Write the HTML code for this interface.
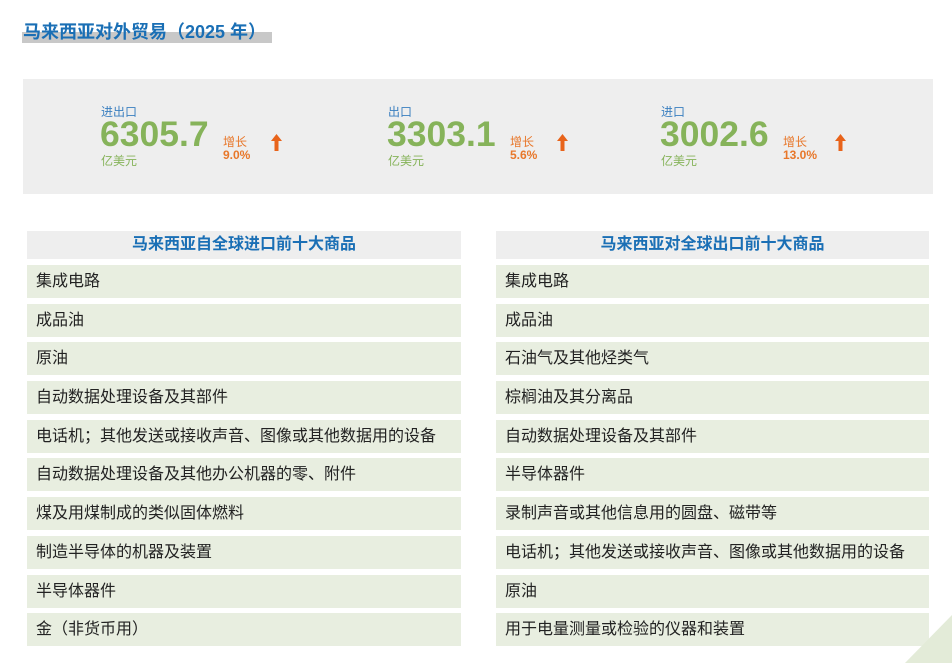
<!DOCTYPE html>
<html><head><meta charset="utf-8"><style>
*{margin:0;padding:0;box-sizing:border-box}
body{width:952px;height:663px;background:#fff;position:relative;overflow:hidden;font-family:"Liberation Sans","Noto Sans CJK SC",sans-serif}
.abs{position:absolute}
.title{left:23px;top:18px;font-size:18px;font-weight:bold;color:#1a6fb5;white-space:nowrap;z-index:2}
.tbar{left:22px;top:32px;width:250px;height:11px;background:#c8c8c8}
.box{left:23px;top:79px;width:910px;height:115px;background:#eeeeee}
.lab{font-size:12px;color:#3a7fc0}
.num{font-size:35.5px;font-weight:bold;color:#86b35a;line-height:35px}
.unit{font-size:12px;color:#86b35a}
.gr{font-size:12px;color:#e8772a}
.pc{font-size:12px;color:#e8772a;font-weight:bold}
.hd{height:28px;background:#eeeeee;color:#1a6fb5;font-weight:bold;font-size:16px;text-align:center;line-height:28px}
.row{height:33px;background:#e8eee0;font-size:16px;color:#222;line-height:33px;padding-left:9px;white-space:nowrap}
.g{height:5.7px}
</style></head><body>
<div class="abs tbar"></div>
<div class="abs title">马来西亚对外贸易（2025 年）</div>
<div class="abs box"></div>

<div class="abs lab" style="left:101px;top:103px">进出口</div>
<div class="abs num" style="left:100px;top:117px">6305.7</div>
<div class="abs unit" style="left:101px;top:152px">亿美元</div>
<div class="abs gr" style="left:223px;top:133px">增长</div>
<div class="abs pc" style="left:223px;top:148px">9.0%</div>

<div class="abs lab" style="left:388px;top:103px">出口</div>
<div class="abs num" style="left:387px;top:117px">3303.1</div>
<div class="abs unit" style="left:388px;top:152px">亿美元</div>
<div class="abs gr" style="left:510px;top:133px">增长</div>
<div class="abs pc" style="left:510px;top:148px">5.6%</div>

<div class="abs lab" style="left:661px;top:103px">进口</div>
<div class="abs num" style="left:660px;top:117px">3002.6</div>
<div class="abs unit" style="left:661px;top:152px">亿美元</div>
<div class="abs gr" style="left:783px;top:133px">增长</div>
<div class="abs pc" style="left:783px;top:148px">13.0%</div>

<svg class="abs" style="left:270px;top:134px" width="13" height="17"><path d="M6.5 0L12 7H8.5V17H4.5V7H1Z" fill="#e8631a"/></svg>
<svg class="abs" style="left:556px;top:134px" width="13" height="17"><path d="M6.5 0L12 7H8.5V17H4.5V7H1Z" fill="#e8631a"/></svg>
<svg class="abs" style="left:834px;top:134px" width="13" height="17"><path d="M6.5 0L12 7H8.5V17H4.5V7H1Z" fill="#e8631a"/></svg>

<div class="abs" style="left:27px;top:231px;width:434px">
<div class="hd">马来西亚自全球进口前十大商品</div>
<div style="height:6px"></div>
<div class="row">集成电路</div><div class="g"></div>
<div class="row">成品油</div><div class="g"></div>
<div class="row">原油</div><div class="g"></div>
<div class="row">自动数据处理设备及其部件</div><div class="g"></div>
<div class="row">电话机；其他发送或接收声音、图像或其他数据用的设备</div><div class="g"></div>
<div class="row">自动数据处理设备及其他办公机器的零、附件</div><div class="g"></div>
<div class="row">煤及用煤制成的类似固体燃料</div><div class="g"></div>
<div class="row">制造半导体的机器及装置</div><div class="g"></div>
<div class="row">半导体器件</div><div class="g"></div>
<div class="row">金（非货币用）</div>
</div>

<div class="abs" style="left:496px;top:231px;width:433px">
<div class="hd">马来西亚对全球出口前十大商品</div>
<div style="height:6px"></div>
<div class="row">集成电路</div><div class="g"></div>
<div class="row">成品油</div><div class="g"></div>
<div class="row">石油气及其他烃类气</div><div class="g"></div>
<div class="row">棕榈油及其分离品</div><div class="g"></div>
<div class="row">自动数据处理设备及其部件</div><div class="g"></div>
<div class="row">半导体器件</div><div class="g"></div>
<div class="row">录制声音或其他信息用的圆盘、磁带等</div><div class="g"></div>
<div class="row">电话机；其他发送或接收声音、图像或其他数据用的设备</div><div class="g"></div>
<div class="row">原油</div><div class="g"></div>
<div class="row">用于电量测量或检验的仪器和装置</div>
</div>

<svg class="abs" style="left:905px;top:615px" width="47" height="48"><path d="M47 0V48H0Z" fill="#e3ebd8"/></svg>
</body></html>
